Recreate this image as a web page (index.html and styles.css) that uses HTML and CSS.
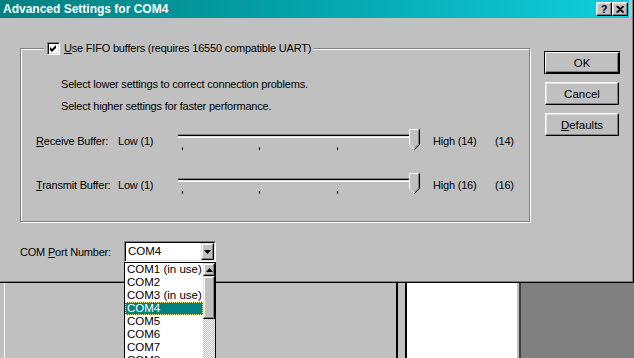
FILE: index.html
```html
<!DOCTYPE html>
<html>
<head>
<meta charset="utf-8">
<link rel="stylesheet" href="styles.css">
</head>
<body>
<div class="screen">
  <div class="dialog">
    <div class="titlebar">
      <span class="title">Advanced Settings for COM4</span>
      <div class="tb-buttons">
        <span class="tb-btn help">?</span>
        <span class="tb-btn close"><svg width="8" height="7" viewBox="0 0 8 7"><path d="M0.5 0 L7 6.5 M1.5 0 L8 6.5 M7 0 L0.5 6.5 M8 0 L1.5 6.5" stroke="#000" stroke-width="1.1" fill="none"/></svg></span>
      </div>
    </div>
    <div class="content">
      <div class="left">
        <div class="group">
          <div class="legend">
            <span class="checkbox"><svg width="9" height="9" viewBox="0 0 9 9"><polygon points="1,3 3,5 7,1 7,4 3,8 1,6" fill="#000"/></svg></span>
            <span><u>U</u>se FIFO buffers (requires 16550 compatible UART)</span>
          </div>
          <p class="note first">Select lower settings to correct connection problems.</p>
          <p class="note">Select higher settings for faster performance.</p>
          <div class="slider-row first">
            <span class="lbl"><u>R</u>eceive Buffer:</span>
            <span class="lbl">Low (1)</span>
            <div class="slider">
              <div class="track"></div>
              <div class="ticks"><i></i><i></i><i></i><i></i></div>
              <svg class="thumb" width="11" height="21" viewBox="0 0 11 21">
                <polygon points="0,0 11,0 11,15.5 5.5,21 0,15.5" fill="#c0c0c0"/>
                <polyline points="0.5,15.5 0.5,0.5 10,0.5" stroke="#fff" fill="none"/>
                <polyline points="0.5,15.5 5.2,20.2" stroke="#fff" fill="none"/>
                <polyline points="10.5,0 10.5,15.5 5.5,20.5" stroke="#000" fill="none"/>
                <polyline points="9.5,1 9.5,15 5.5,19" stroke="#808080" fill="none"/>
              </svg>
            </div>
            <span class="lbl">High (14)</span>
            <span class="lbl">(14)</span>
          </div>
          <div class="slider-row">
            <span class="lbl"><u>T</u>ransmit Buffer:</span>
            <span class="lbl">Low (1)</span>
            <div class="slider">
              <div class="track"></div>
              <div class="ticks"><i></i><i></i><i></i><i></i></div>
              <svg class="thumb" width="11" height="21" viewBox="0 0 11 21">
                <polygon points="0,0 11,0 11,15.5 5.5,21 0,15.5" fill="#c0c0c0"/>
                <polyline points="0.5,15.5 0.5,0.5 10,0.5" stroke="#fff" fill="none"/>
                <polyline points="0.5,15.5 5.2,20.2" stroke="#fff" fill="none"/>
                <polyline points="10.5,0 10.5,15.5 5.5,20.5" stroke="#000" fill="none"/>
                <polyline points="9.5,1 9.5,15 5.5,19" stroke="#808080" fill="none"/>
              </svg>
            </div>
            <span class="lbl">High (16)</span>
            <span class="lbl">(16)</span>
          </div>
        </div>
        <div class="port-row">
          <span class="port-label">COM <u>P</u>ort Number:</span>
          <div class="combo">
            <span class="combo-text">COM4</span>
            <span class="combo-btn"><svg width="7" height="4" viewBox="0 0 7 4"><polygon points="0,0 7,0 3.5,4" fill="#000"/></svg></span>
            <div class="droplist">
              <div class="items">
                <div class="item">COM1 (in use)</div>
                <div class="item">COM2</div>
                <div class="item">COM3 (in use)</div>
                <div class="item selected">COM4</div>
                <div class="item">COM5</div>
                <div class="item">COM6</div>
                <div class="item">COM7</div>
                <div class="item">COM8</div>
                <div class="item">COM9</div>
              </div>
              <div class="scrollbar">
                <span class="sb-btn"><svg width="7" height="4" viewBox="0 0 7 4"><polygon points="0,4 7,4 3.5,0" fill="#000"/></svg></span>
                <span class="sb-thumb"></span>
                <span class="sb-track"></span>
              </div>
            </div>
          </div>
        </div>
      </div>
      <div class="buttons">
        <span class="btn default">OK</span>
        <span class="btn">Cancel</span>
        <span class="btn"><u>D</u>efaults</span>
      </div>
    </div>
  </div>
  <div class="desktop">
    <div class="bg-window"><div class="bg-edge"></div></div>
    <div class="splitter"></div>
    <div class="white-pane"></div>
    <div class="dark-pane"></div>
  </div>
</div>
</body>
</html>
```
FILE: styles.css
```css
* { box-sizing: border-box; margin: 0; padding: 0; }
html, body { width: 634px; height: 358px; overflow: hidden; background: #c0c0c0; }
body {
  font-family: "Liberation Sans", Arial, sans-serif;
  font-size: 11px;
  letter-spacing: -0.2px;
  color: #000;
}
u { text-decoration: underline; text-underline-offset: 1px; }

.screen { width: 634px; height: 358px; overflow: hidden; display: flex; flex-direction: column; position: relative; }

.dialog {
  height: 283px;
  flex: none;
  background: #c0c0c0;
  border-right: 1px solid #000;
  border-bottom: 1px solid #000;
  box-shadow: inset -1px -1px 0 #808080;
  padding-right: 4px;
  position: relative;
  z-index: 2;
}

.titlebar {
  height: 18px;
  display: flex;
  align-items: center;
  justify-content: space-between;
  padding: 0 1px 0 3px;
  background: linear-gradient(90deg, #008080 0%, #05a4ac 50%, #10cedc 100%);
}
.title { color: #fff; font-weight: bold; font-size: 12px; letter-spacing: 0; }
.tb-buttons { display: flex; }
.tb-btn {
  width: 16px; height: 14px;
  background: #c0c0c0;
  border: 1px solid; border-color: #fff #000 #000 #fff;
  box-shadow: inset -1px -1px 0 #808080, inset 1px 1px 0 #dfdfdf;
  display: flex; align-items: center; justify-content: center;
}
.tb-btn.help { font-weight: bold; font-size: 11px; line-height: 12px; letter-spacing: 0; }

.content { display: flex; padding: 30px 0 0 20px; }
.left { width: 511px; }

.group {
  width: 510px; height: 174px;
  border: 1px solid #808080;
  box-shadow: 1px 1px 0 #fff, inset 1px 1px 0 #fff;
}
.legend {
  display: flex; align-items: center; gap: 4px;
  width: fit-content;
  height: 13px;
  margin: -7px 0 0 23px;
  padding: 0 3px;
  background: #c0c0c0;
  line-height: 13px;
}
.checkbox {
  width: 13px; height: 13px;
  background: #fff;
  border: 1px solid; border-color: #808080 #fff #fff #808080;
  box-shadow: inset 1px 1px 0 #000, inset -1px -1px 0 #dfdfdf;
  display: flex; align-items: center; justify-content: center;
}
.note { margin: 8px 0 0 40px; height: 14px; line-height: 14px; }
.note.first { margin-top: 22px; }

.slider-row {
  display: grid;
  grid-template-columns: 82px 60px 255px 62px auto;
  height: 22px;
  padding-left: 15px;
  margin-top: 22px;
}
.slider-row.first { margin-top: 16px; }
.lbl { padding-top: 5px; line-height: 14px; white-space: nowrap; }
.slider { position: relative; width: 242px; height: 22px; }
.track {
  margin-top: 5px;
  height: 4px;
  border-top: 1px solid #808080;
  border-bottom: 1px solid #fff;
  background: linear-gradient(#000 50%, #dfdfdf 50%);
}
.ticks {
  margin-top: 9px;
  height: 3px;
  display: flex; justify-content: space-between;
  padding: 0 5px 0 4px;
}
.ticks i { display: block; width: 1px; height: 3px; background: #000; }
.thumb { position: absolute; left: 231px; top: 0; }

.port-row { display: flex; align-items: center; height: 21px; margin-top: 19px; }
.port-label { width: 104px; white-space: nowrap; }
.combo {
  position: relative;
  width: 92px; height: 21px;
  border: 1px solid; border-color: #808080 #fff #fff #808080;
  box-shadow: inset 1px 1px 0 #000, inset -1px -1px 0 #dfdfdf;
  background: #fff;
  padding: 1px;
  display: flex;
}
.combo-text { flex: 1; padding-left: 2px; line-height: 17px; letter-spacing: 0; font-size: 11.5px; }
.combo-btn {
  width: 13px; height: 17px;
  background: #c0c0c0;
  border: 1px solid; border-color: #dfdfdf #000 #000 #dfdfdf;
  box-shadow: inset -1px -1px 0 #808080, inset 1px 1px 0 #fff;
  display: flex; align-items: center; justify-content: center;
}
.droplist {
  position: absolute;
  top: calc(100% + 1px);
  left: -1px;
  width: 92px; height: 140px;
  border: 1px solid #000;
  background: #fff;
  display: flex;
  z-index: 10;
}
.items { flex: 1; }
.item { height: 13px; line-height: 13px; padding-left: 2px; font-size: 11.5px; letter-spacing: 0; white-space: nowrap; }
.item.selected { background: #008080; color: #fff; outline: 1px dotted #e8e890; outline-offset: -1px; }
.scrollbar { width: 12px; display: flex; flex-direction: column; }
.sb-btn, .sb-thumb {
  background: #c0c0c0;
  border: 1px solid; border-color: #dfdfdf #000 #000 #dfdfdf;
  box-shadow: inset -1px -1px 0 #808080, inset 1px 1px 0 #fff;
}
.sb-btn { height: 13px; display: flex; align-items: center; justify-content: center; }
.sb-thumb { height: 43px; }
.sb-track { flex: 1; background: repeating-conic-gradient(#c0c0c0 0 25%, #fff 0 50%) 0 0 / 2px 2px; }

.buttons { margin: 3px 0 0 13px; display: flex; flex-direction: column; gap: 8px; }
.btn {
  width: 74px; height: 23px; margin-left: 1px;
  background: #c0c0c0;
  border: 1px solid; border-color: #fff #000 #000 #fff;
  box-shadow: inset -1px -1px 0 #808080, inset 1px 1px 0 #dfdfdf;
  display: flex; align-items: center; justify-content: center;
  font-size: 11.5px; letter-spacing: 0;
}
.btn.default {
  width: 76px; margin-left: 0;
  border: 1px solid #000;
  box-shadow: inset 1px 1px 0 #fff, inset -1px -1px 0 #000, inset -2px -2px 0 #808080;
}

.desktop { flex: 1; display: flex; }
.bg-window { width: 396px; padding-left: 4px; background: #c0c0c0; }
.bg-edge { height: 100%; border-left: 1px solid #fff; }
.splitter { width: 11px; background: #c0c0c0; border-left: 2px solid #000; border-right: 2px solid #000; }
.white-pane { width: 112px; background: #fff; border-right: 2px solid #c0c0c0; }
.dark-pane { flex: 1; background: #808080; border-left: 2px solid #404040; }
```
